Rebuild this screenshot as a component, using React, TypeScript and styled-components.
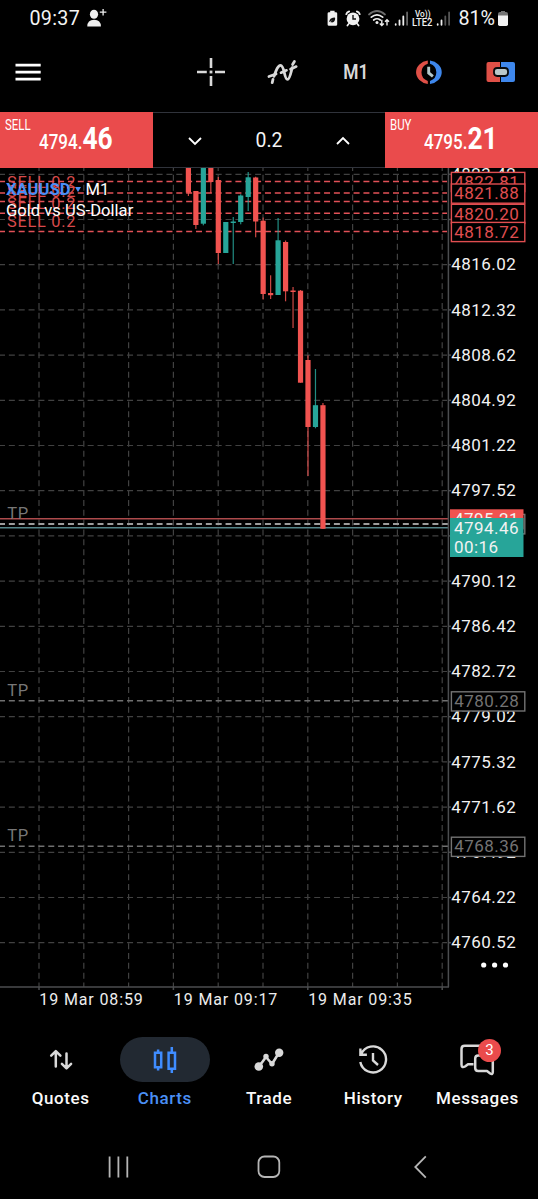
import React from "react";
import styled, { createGlobalStyle } from "styled-components";

const RED = "#ea4b4c";
const CANDLE_RED = "#f15350";
const TEAL = "#27a599";
const BLUE = "#4a8ff5";
const ICON = "#d9d9d9";

const GlobalStyle = createGlobalStyle`
  * { box-sizing: border-box; }
  html, body { margin: 0; background: #000; }
  body { font-family: Roboto, "Liberation Sans", sans-serif; color: #f4f4f4; overflow: hidden; }
  svg { display: block; flex: none; }
`;

const Screen = styled.main`
  width: 538px;
  height: 1199px;
  display: flex;
  flex-direction: column;
  background: #000;
`;

const StatusBar = styled.header`
  height: 37px;
  display: flex;
  justify-content: space-between;
  align-items: flex-start;
  padding: 7px 29px 0 29.5px;
  font-size: 19.7px;
  line-height: 23px;
`;

const StatusGroup = styled.div`
  display: flex;
  gap: 7px;
`;

const Time = styled.span`
  letter-spacing: 0.3px;
`;

const Toolbar = styled.nav`
  height: 74px;
  display: flex;
  align-items: center;
  justify-content: space-between;
  padding: 0 22px 4px 15px;
`;

const ToolGroup = styled.div`
  display: flex;
  align-items: center;
`;

const Tool = styled.div<{ $width: number }>`
  width: ${(p) => p.$width}px;
  display: flex;
  justify-content: center;
`;

const Timeframe = styled.span`
  font-size: 20.5px;
  font-weight: 600;
  line-height: 24px;
  color: ${ICON};
  transform: scaleX(0.85);
`;

const TradeBar = styled.section`
  height: 57px;
  display: grid;
  grid-template-columns: 153px 232px 153px;
`;

const PriceButton = styled.button`
  display: flex;
  flex-direction: column;
  margin: 1px 0 0;
  border: 0;
  padding: 6px 0 0 5px;
  background: ${RED};
  color: #fff;
  font-family: inherit;
  text-align: left;
`;

const Side = styled.span`
  height: 14px;
  font-size: 13.8px;
  line-height: 15px;
  transform: scaleX(0.83);
  transform-origin: left;
`;

const Price = styled.span`
  height: 30px;
  margin: -8px 0 0 33.8px;
  font-size: 20px;
  font-weight: 500;
  line-height: 36px;
  white-space: nowrap;
  transform: scaleX(0.85);
  transform-origin: left;
`;

const Pips = styled.b`
  font-size: 31px;
  font-weight: 700;
  line-height: 30px;
`;

const Volume = styled.div`
  display: flex;
  align-items: center;
  justify-content: space-between;
  padding: 1px 35px 0;
  margin-top: 1px;
  border-top: 1px solid #30333b;
  border-bottom: 1px solid #30333b;
  font-size: 19.4px;
`;

const ChartArea = styled.section`
  position: relative;
  height: 848px;
`;

const SymbolInfo = styled.div`
  position: absolute;
  left: 6px;
  top: 11px;
  font-size: 16.6px;
  line-height: 21px;
  color: #fff;
`;

const SymbolRow = styled.div`
  display: flex;
  align-items: center;
`;

const Ticker = styled.b`
  width: 69px;
  color: ${BLUE};
  font-weight: 700;
`;

const Caret = styled.i`
  border: 3px solid transparent;
  border-top: 5px solid ${BLUE};
  border-bottom: 0;
  margin-right: 4.5px;
`;

const TabBar = styled.nav`
  height: 104px;
  display: grid;
  grid-template-columns: repeat(5, 104.2px);
  padding: 21px 0 0 8.6px;
`;

const Tab = styled.div<{ $active?: boolean }>`
  display: flex;
  flex-direction: column;
  align-items: center;
  font-size: 17px;
  font-weight: 500;
  letter-spacing: 0.6px;
  line-height: 20px;
  color: ${(p) => (p.$active ? BLUE : "#fafafa")};
`;

const TabIcon = styled.div<{ $active?: boolean }>`
  position: relative;
  width: 90px;
  height: 45px;
  margin-bottom: 6px;
  display: grid;
  place-items: center;
  border-radius: 23px;
  background: ${(p) => (p.$active ? "#222932" : "transparent")};
`;

const Badge = styled.span`
  position: absolute;
  left: 45.5px;
  top: 2px;
  width: 23px;
  height: 23px;
  border-radius: 50%;
  background: ${RED};
  color: #fff;
  font-size: 15px;
  font-weight: 400;
  letter-spacing: 0;
  line-height: 23px;
  text-align: center;
`;

const SystemNav = styled.footer`
  height: 79px;
  display: flex;
  justify-content: space-between;
  padding: 35px 110px 0 107px;
`;

type Candle = [open: number, close: number, high: number, low: number, up?: 1];

const candles: Candle[] = [
  [160, 192.7, 160, 196],
  [191, 225, 191, 229],
  [160, 223.7, 160, 225.3, 1],
  [160, 182, 160, 193],
  [180, 253, 177, 264],
  [222, 253, 222, 253, 1],
  [221.5, 223, 217, 264, 1],
  [195.5, 222, 194.3, 224.3, 1],
  [177.3, 197, 172, 211, 1],
  [177.5, 221.5, 176.7, 237.3],
  [220.7, 294, 217.5, 299.5],
  [293, 295.2, 275.3, 299],
  [240.3, 295, 218, 295, 1],
  [242, 291.3, 240.5, 301.3],
  [290.5, 292, 287, 328],
  [290.7, 382.7, 290, 382.7],
  [360, 427, 355.3, 476],
  [405.2, 427, 369, 428.3, 1],
  [405.2, 528.8, 403, 528.8],
];

const gridX = Array.from({ length: 10 }, (_, i) => 39 + i * 44.8);
const gridY = Array.from({ length: 18 }, (_, i) => 174 + i * 45.2);
const sellLines = [181.4, 193, 201.4, 213.3, 231.4];
const sellBoxes: [string, number][] = [
  ["4822.81", 181.4],
  ["4821.88", 193],
  ["4820.20", 213.3],
  ["4818.72", 231.4],
];
const takeProfits: [string, number][] = [
  ["4780.28", 700.8],
  ["4768.36", 846.2],
];

function AxisText({ x, y, fill = "#f2f2f2", children }: { x: number; y: number; fill?: string; children: string }) {
  return (
    <text x={x} y={y} fontSize="17" fill={fill} textLength="64.5">
      {children}
    </text>
  );
}

function LevelBox({ y, color, label }: { y: number; color: string; label: string }) {
  return (
    <g>
      <rect x="451.4" y={y - 9} width="73.4" height="19.2" fill="#000" stroke={color} strokeWidth="1.4" />
      <AxisText x={454.3} y={y + 6.2} fill={color}>{label}</AxisText>
    </g>
  );
}

function Chart() {
  return (
    <svg width="538" height="848" viewBox="0 168 538 848" fontFamily="Roboto, sans-serif">
      <g stroke="#414141" strokeWidth="1.2">
        {gridY.map((y) => (
          <line key={y} x1="0" x2="447" y1={y + 0.3} y2={y + 0.3} strokeDasharray="6 3.85" strokeDashoffset="1" />
        ))}
        {gridX.map((x) => (
          <line key={x} y1="168" y2="987" x1={x} x2={x} strokeDasharray="6 3.85" strokeDashoffset="3" />
        ))}
      </g>
      <g stroke="#e25157" strokeWidth="1.5" strokeDasharray="6 3.85" strokeDashoffset="1">
        {sellLines.map((y) => <line key={y} x1="0" x2="447" y1={y} y2={y} />)}
      </g>
      <g fill="#d94a4b" fontSize="16.4">
        {sellLines.slice(1).map((y) => (
          <text key={y} x="7" y={y - 4.8} textLength="68.5">SELL 0.2</text>
        ))}
      </g>
      <line x1="0" x2="448" y1="518.8" y2="518.8" stroke="#ae4b4c" strokeWidth="1.5" />
      <line x1="0" x2="448" y1="524" y2="524" stroke="#9c9c9c" strokeWidth="2" strokeDasharray="6 3.85" strokeDashoffset="1" />
      <line x1="0" x2="448" y1="527.8" y2="527.8" stroke="#56858a" strokeWidth="1.4" />
      <g fill="#777" fontSize="16.6">
        <text x="7.2" y="518.7" textLength="21">TP</text>
        {takeProfits.map(([label, y]) => (
          <g key={label}>
            <line x1="0" x2="448" y1={y} y2={y} stroke="#707070" strokeWidth="1.5" strokeDasharray="6 3.85" strokeDashoffset="1" />
            <text x="7.2" y={y - 4.9} textLength="21">TP</text>
          </g>
        ))}
      </g>
      {candles.map(([open, close, high, low, up], i) => {
        const x = 188.4 + i * 7.475;
        const color = up ? TEAL : CANDLE_RED;
        return (
          <g key={i} fill={color}>
            <rect x={x - 0.6} y={high} width="1.2" height={low - high} opacity="0.85" />
            <rect x={x - 2.6} y={open} width="5.2" height={close - open} />
          </g>
        );
      })}
      <g stroke="#4b4d4f" strokeWidth="1.5">
        <line x1="448.4" x2="448.4" y1="168" y2="987" />
        <line x1="0" x2="449" y1="987" y2="987" />
        {gridX.filter((_, i) => i % 3 === 0).map((x) => <line key={x} x1={x} x2={x} y1="987" y2="990" />)}
        {gridY.map((y) => <line key={y} x1="448" x2="451" y1={y + 0.3} y2={y + 0.3} />)}
      </g>
      {gridY.map((y, i) =>
        i === 1 || i === 8 ? null : (
          <AxisText key={y} x={451.2} y={y + 6}>{(4823.42 - i * 3.7).toFixed(2)}</AxisText>
        )
      )}
      {sellBoxes.map(([label, y]) => <LevelBox key={label} label={label} y={y} color="#e04e50" />)}
      {takeProfits.map(([label, y]) => <LevelBox key={label} label={label} y={y} color="#737373" />)}
      <rect x="451.4" y="514.4" width="73.4" height="19.5" fill="#000" stroke="#737373" strokeWidth="1.4" />
      <rect x="450" y="509.3" width="73.5" height="20" fill={CANDLE_RED} />
      <AxisText x={454} y={525}>4795.21</AxisText>
      <rect x="450" y="518" width="73.5" height="39" fill={TEAL} />
      <AxisText x={454} y={534.3}>4794.46</AxisText>
      <text x="454" y="553.4" fontSize="17" fill="#f2f2f2" textLength="44">00:16</text>
      {[483.7, 494.6, 505.5].map((x) => <circle key={x} cx={x} cy="965" r="2.6" fill="#fff" />)}
      <g fontSize="16" fill="#ededed">
        <text x="39.3" y="1004.5" textLength="103.5">19 Mar 08:59</text>
        <text x="173.8" y="1004.5" textLength="103.5">19 Mar 09:17</text>
        <text x="308.2" y="1004.5" textLength="103.5">19 Mar 09:35</text>
      </g>
    </svg>
  );
}

function StatusIcons() {
  return (
    <svg width="126" height="24" viewBox="325 7 126 24">
      <path d="M329 12.2h1.2v-1.4h4.4v1.4h1.2q1.4 0 1.4 1.4v10.8q0 1.4-1.4 1.4H329q-1.4 0-1.4-1.4V13.6q0-1.4 1.4-1.4z" fill="#f0f0f0" />
      <path d="M328.8 22.2c1-1 .4-4.7 5.8-4.8 1.2 0 .6 5-2.6 5-1 0-1.7-.3-1.7-.3l2.3-2.2" fill="#111" />
      <circle cx="353" cy="18.8" r="6.4" fill="#f0f0f0" />
      <path d="M346.2 14.2q.6-2 3-2.8M359.8 14.2q-.6-2-3-2.8M348.6 24l-1.2 1.6M357.4 24l1.2 1.6" stroke="#f0f0f0" strokeWidth="1.7" fill="none" strokeLinecap="round" />
      <path d="M353 15v4h3" stroke="#111" strokeWidth="1.4" fill="none" />
      <g fill="none" strokeWidth="1.7" strokeLinecap="round">
        <path d="M369 14.5q8-7 16 0" stroke="#6b6b6b" />
        <path d="M371.3 17.2q5.7-4.7 11.4 0M373.7 20q3.3-2.5 6.6 0" stroke="#eee" />
      </g>
      <circle cx="377" cy="22.6" r="1.5" fill="#eee" />
      <path d="M381.8 19.8v5.4M379.8 23.4l2 2 2-2M387 25.4V20M385 21.8l2-2 2 2" stroke="#eee" strokeWidth="1.4" fill="none" />
      <g strokeWidth="1.8" strokeLinecap="round">
        <path d="M395.7 24.2v.6M399.5 20.5v4.3M403.3 16.5v8.3" stroke="#eee" />
        <path d="M407.1 12.5v12.3" stroke="#666" />
        <path d="M437.7 24.2v.6M441.5 20.5v4.3" stroke="#eee" />
        <path d="M445.3 16.5v8.3M449.1 12.5v12.3" stroke="#555" />
      </g>
      <g fill="#f0f0f0" fontFamily="Roboto, sans-serif" fontWeight="500">
        <text x="415" y="17.4" fontSize="9.4" textLength="15.5" lengthAdjust="spacingAndGlyphs">Vo))</text>
        <text x="412" y="26" fontSize="10" textLength="20.5" lengthAdjust="spacingAndGlyphs">LTE2</text>
      </g>
    </svg>
  );
}

const MenuIcon = () => (
  <svg width="26" height="20" viewBox="0 0 26 20" fill="#fff">
    <path d="M.5 1.7h25.2v2.7H.5zM.5 8.7h25.2v2.7H.5zM.5 15.8h25.2v2.7H.5z" />
  </svg>
);

const CrosshairIcon = () => (
  <svg width="30" height="30" viewBox="0 0 30 30">
    <path d="M1 15h9.8M19 15h10M15 1v10M15 19v10" stroke={ICON} strokeWidth="2.6" />
    <rect x="13.6" y="13.6" width="2.8" height="2.8" fill={ICON} />
  </svg>
);

const IndicatorIcon = () => (
  <svg width="34" height="28" viewBox="266 58 34 28" fill="none" strokeLinecap="round">
    <path d="M272.2 82.7l.8-3.4M292.6 64.5l1.8-3" stroke={ICON} strokeWidth="2.8" />
    <path d="M268.9 76.6l7.2-2.7M281 72.7l5.5-2.4M290.5 69.2l5.7-2.6" stroke={ICON} strokeWidth="2.7" />
    <path d="M274 76.4c2.2-6.5 4-11 6.5-11 4.2 0 3.4 14 7 14 2.4 0 3.4-7 4.7-11.7" stroke={ICON} strokeWidth="2.8" />
  </svg>
);

const ClockIcon = () => (
  <svg width="30" height="26" viewBox="414 59 30 26" fill="none">
    <path d="M427.8 60.6A13.5 11.8 0 0 0 427.8 84v-3.1A9 9 0 0 1 427.8 63.7z" fill="#df5047" />
    <path d="M430 60.6A13.5 11.8 0 0 1 430 84v-3.1A9 9 0 0 0 430 63.7z" fill="#3e87ec" />
    <path d="M428.7 66.8v6.2l4.2 3.4" stroke="#b5c7c9" strokeWidth="2.9" />
  </svg>
);

const PanelIcon = () => (
  <svg width="30" height="22" viewBox="487 61 30 22">
    <path d="M489.5 62H501v20h-11.5q-2 0-2-2V64q0-2 2-2z" fill="#df5047" />
    <path d="M502 62h12q2 0 2 2v16q0 2-2 2h-12z" fill="#3e87ec" />
    <rect x="495" y="68" width="14" height="8" rx="3.2" fill="#b9c8ca" stroke="#05090c" strokeWidth="1.8" />
  </svg>
);

const Chevron = ({ up }: { up?: boolean }) => (
  <svg width="14" height="10" viewBox="0 0 14 10" fill="none" stroke="#fff" strokeWidth="1.8">
    <path d={up ? "M1 8l6-6 6 6" : "M1 2l6 6 6-6"} />
  </svg>
);

const tabs = [
  {
    name: "Quotes",
    icon: (
      <svg width="24" height="22" viewBox="0 0 24 22" fill="none" stroke={ICON} strokeWidth="2.5" strokeLinecap="round" strokeLinejoin="round">
        <path d="M6.8 17.5V2.5M2.2 6.7l4.6-4.6 4.6 4.6M17.5 4.5v14.7M12.9 14.8l4.6 4.6 4.6-4.6" />
      </svg>
    ),
  },
  {
    name: "Charts",
    icon: (
      <svg width="24" height="28" viewBox="0 0 24 28" fill="none" stroke="#3f8cff" strokeWidth="2.5">
        <path d="M2 6.7h6.2v14.5H2zM5.1 3.5v3M5.1 21v3.5M15.6 6.7H22v16h-6.4zM18.8 1v6M18.8 22.5v4.5" />
      </svg>
    ),
  },
  {
    name: "Trade",
    icon: (
      <svg width="30" height="24" viewBox="0 0 30 24" fill="none" stroke={ICON} strokeWidth="2.6" strokeLinejoin="round">
        <path d="M5 18.5l7-9.5 6 7 6.8-11" />
        <g fill={ICON} stroke="none">
          <circle cx="4.8" cy="18.5" r="4.3" /><circle cx="12" cy="8.4" r="2.7" />
          <circle cx="18" cy="15.8" r="2.7" /><circle cx="25.2" cy="4.7" r="4.2" />
        </g>
      </svg>
    ),
  },
  {
    name: "History",
    icon: (
      <svg width="30" height="30" viewBox="0 0 30 30" fill="none" stroke={ICON} strokeWidth="2.4">
        <path d="M3.2 9A13 13 0 1 1 2.3 17M2.4 3.5v6.3h6.5M15 8v7.5l5 4.5" />
      </svg>
    ),
  },
  {
    name: "Messages",
    badge: 3,
    icon: (
      <svg width="36" height="34" viewBox="459 1042 36 34" fill="none" stroke={ICON} strokeWidth="2.5" strokeLinejoin="round">
        <path d="M473.5 1063.2H468l-3 2.3q-3.5 1.7-3.5-2V1048q0-3.2 3.2-3.2h21" />
        <path d="M475.2 1057.5q0-3 3-3h12q2.6 0 2.6 3v13.5q0 3-2.6 1.5l-3.2-2.4h-8.8q-3 0-3-3z" />
      </svg>
    ),
  },
];

export default function App() {
  return (
    <Screen>
      <GlobalStyle />
      <StatusBar>
        <StatusGroup>
          <Time>09:37</Time>
          <svg width="20" height="22" viewBox="87 7 20 22" fill="#efefef">
            <ellipse cx="94" cy="14.2" rx="4.1" ry="4.5" />
            <path d="M87.3 26.5q0-6.8 6.8-6.8t6.8 6.8z" />
            <path d="M99.8 12.2h6.6M103.1 8.9v6.6" stroke="#efefef" strokeWidth="1.3" />
          </svg>
        </StatusGroup>
        <StatusGroup>
          <StatusIcons />
          <span>81%</span>
          <svg width="12" height="20" viewBox="0 0 12 20" style={{ marginLeft: -5 }}>
            <path d="M3 5h1V4h4v1h1q2 0 2 2v2H1V7q0-2 2-2z" fill="#747474" />
            <path d="M1 8.5h10v8.8q0 1.7-1.7 1.7H2.7Q1 19 1 17.3z" fill="#f2f2f2" />
          </svg>
        </StatusGroup>
      </StatusBar>
      <Toolbar>
        <MenuIcon />
        <ToolGroup>
          <Tool $width={30}><CrosshairIcon /></Tool>
          <Tool $width={114}><IndicatorIcon /></Tool>
          <Tool $width={32}><Timeframe>M1</Timeframe></Tool>
          <Tool $width={114.4}><ClockIcon /></Tool>
          <Tool $width={30}><PanelIcon /></Tool>
        </ToolGroup>
      </Toolbar>
      <TradeBar>
        <PriceButton>
          <Side>SELL</Side>
          <Price>4794.<Pips>46</Pips></Price>
        </PriceButton>
        <Volume>
          <Chevron />
          <span>0.2</span>
          <Chevron up />
        </Volume>
        <PriceButton>
          <Side>BUY</Side>
          <Price>4795.<Pips>21</Pips></Price>
        </PriceButton>
      </TradeBar>
      <ChartArea>
        <Chart />
        <SymbolInfo>
          <SymbolRow><Ticker>XAUUSD</Ticker><Caret />M1</SymbolRow>
          <div>Gold vs US-Dollar</div>
        </SymbolInfo>
      </ChartArea>
      <TabBar>
        {tabs.map(({ name, icon, badge }) => (
          <Tab key={name} $active={name === "Charts"}>
            <TabIcon $active={name === "Charts"}>
              {icon}
              {badge && <Badge>{badge}</Badge>}
            </TabIcon>
            {name}
          </Tab>
        ))}
      </TabBar>
      <SystemNav>
        <svg width="22" height="24" viewBox="0 0 22 24" stroke="#b5b5b5" strokeWidth="1.8">
          <path d="M2.6 1.5v21M11.4 1.5v21M20.3 1.5v21" />
        </svg>
        <svg width="24" height="24" viewBox="0 0 24 24" fill="none" stroke="#b5b5b5" strokeWidth="1.8">
          <rect x="1.5" y="1.5" width="20.8" height="20.5" rx="6" />
        </svg>
        <svg width="19" height="24" viewBox="-3 0 19 24" fill="none" stroke="#b5b5b5" strokeWidth="1.8">
          <path d="M13.8 1.3L3.3 12l10.5 10.7" />
        </svg>
      </SystemNav>
    </Screen>
  );
}
